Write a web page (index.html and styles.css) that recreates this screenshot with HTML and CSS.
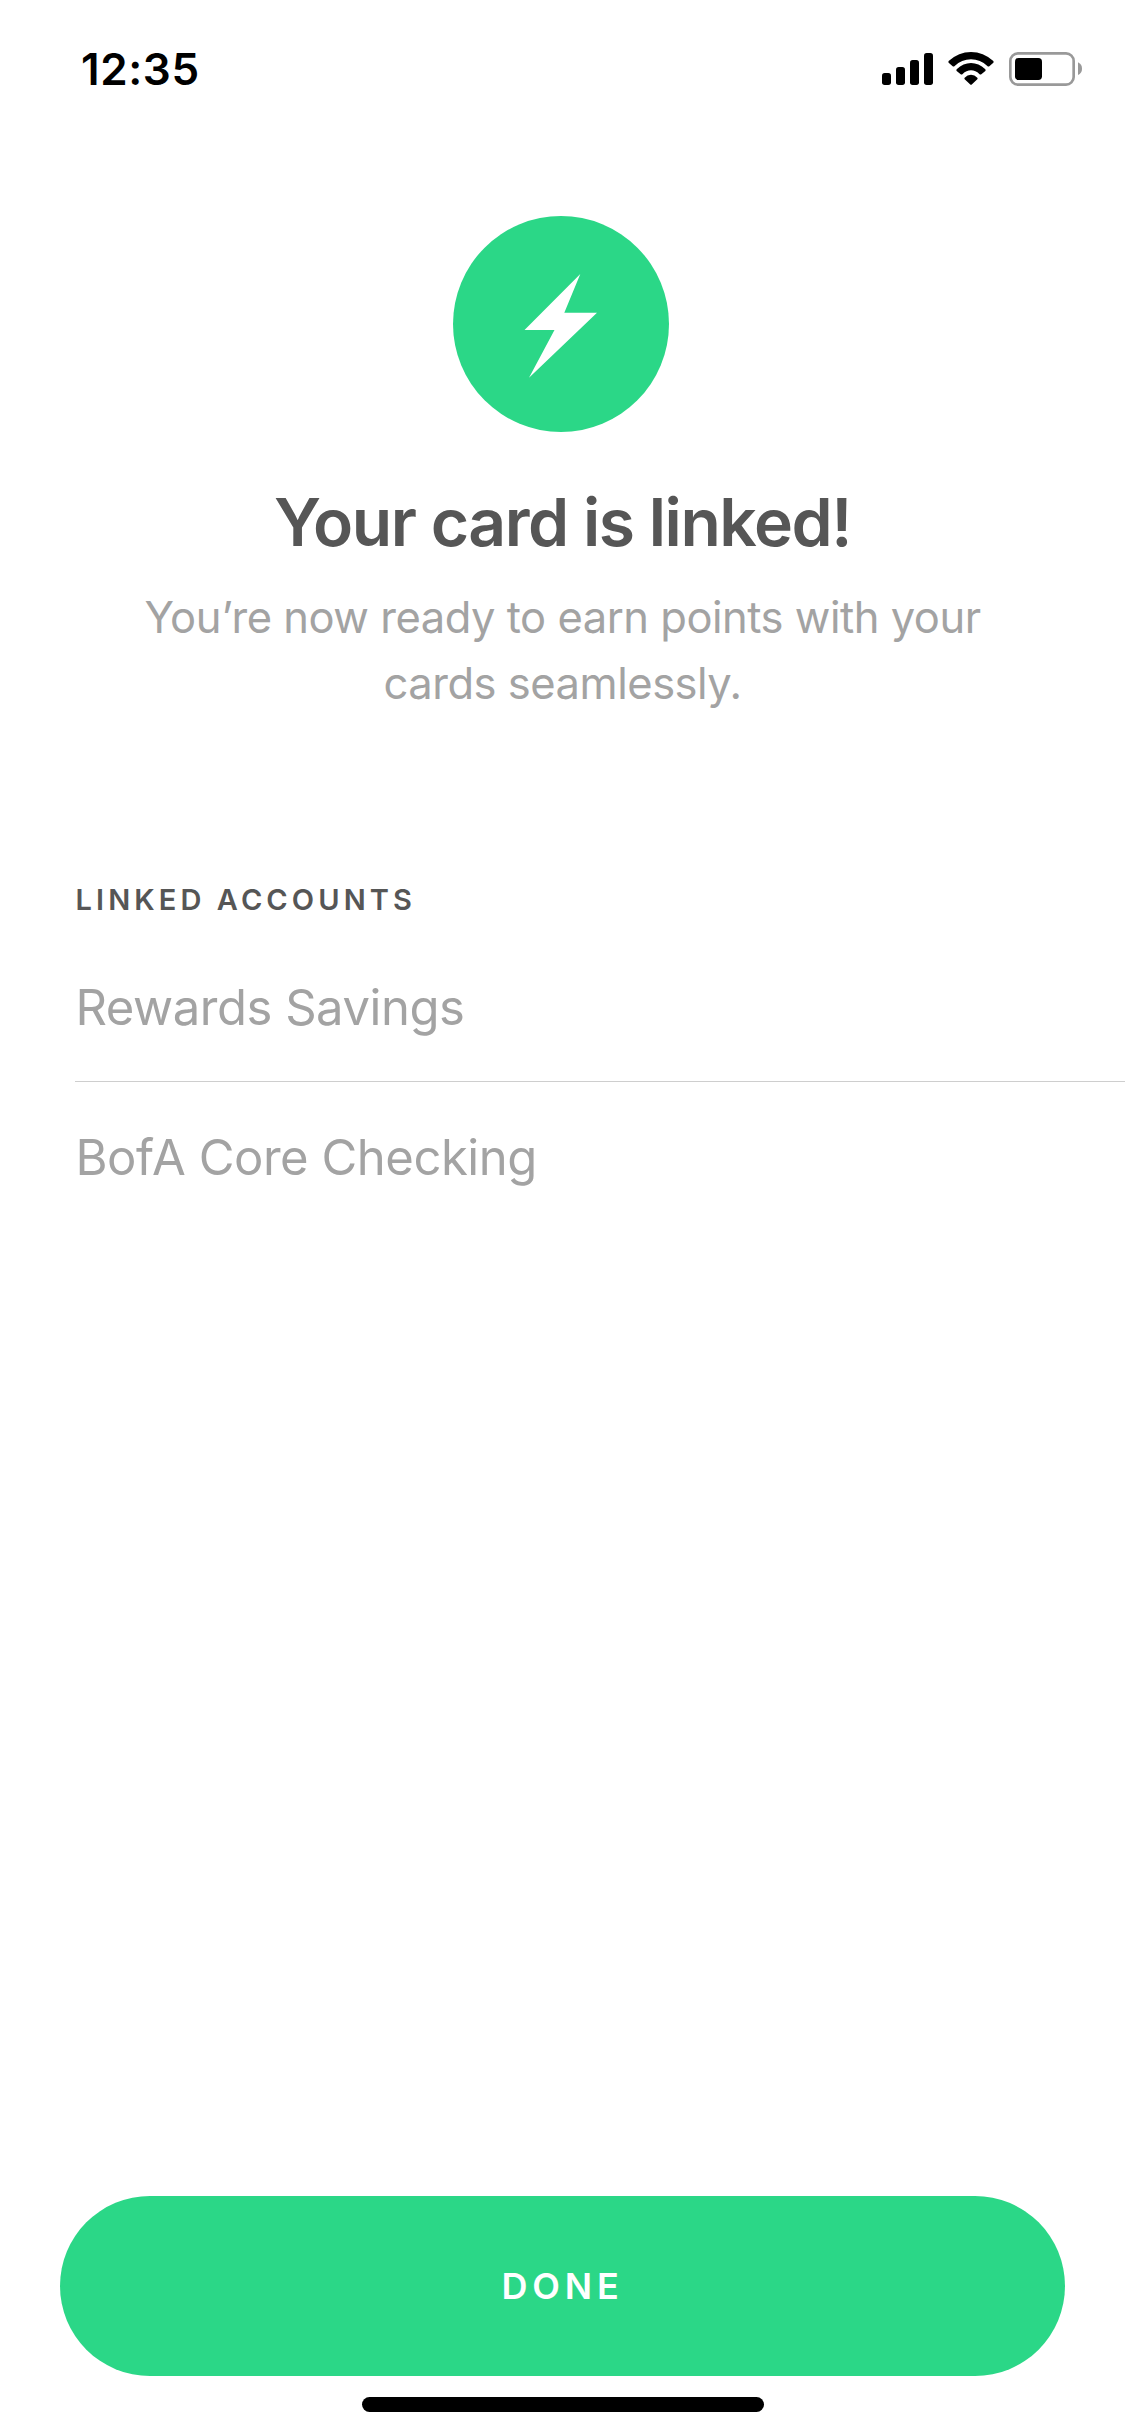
FILE: index.html
```html
<!DOCTYPE html>
<html lang="en">
<head>
<meta charset="utf-8">
<title>Card linked</title>
<link rel="stylesheet" href="styles.css">
</head>
<body>
<div class="screen">
  <header class="status-bar">
    <span class="time">12:35</span>
    <svg class="status-icons" viewBox="0 0 690 240" aria-hidden="true">
      <!-- signal strength -->
      <rect x="36" y="129" width="27" height="36" rx="8"/>
      <rect x="78" y="111" width="27" height="54" rx="8"/>
      <rect x="120" y="90" width="27" height="75" rx="8"/>
      <rect x="162" y="69" width="27" height="96" rx="8"/>
      <!-- wi-fi -->
      <path d="M236 93Q266 66 303 66T370 93Q372 96 370 98L358 109Q355 111 352 108Q331 88 303 88T254 108Q251 111 248 109L236 98Q234 96 236 93Z"/>
      <path d="M260 118Q280 99 303 99T346 118Q348 121 346 123L334 133Q331 135 328 132Q317 121 303 121T278 132Q275 135 272 133L260 123Q258 121 260 118Z"/>
      <path d="M284 143Q292 134 303 134T322 143Q324 145 322 148L306 163Q303 166 300 163L284 148Q282 145 284 143Z"/>
      <!-- battery -->
      <rect class="battery-shell" x="421" y="70" width="190" height="94" rx="23"/>
      <rect x="435" y="84" width="81" height="66" rx="11"/>
      <path class="battery-cap" d="M624 97Q636 103 636 116T624 135Z"/>
    </svg>
  </header>

  <main class="content">
    <section class="hero">
      <svg class="badge" viewBox="0 0 216 216" aria-hidden="true">
        <circle class="badge-disc" cx="108" cy="108" r="108"/>
        <path class="badge-bolt" d="M127.3 58L111.3 96.7H144L76 161.7L101.5 114H71.5Z"/>
      </svg>
      <h1 class="title">Your card is linked!</h1>
      <p class="subtitle">You’re now ready to earn points with your cards seamlessly.</p>
    </section>

    <section class="accounts">
      <h2 class="accounts-heading">LINKED ACCOUNTS</h2>
      <ul class="account-list">
        <li class="account">Rewards Savings</li>
        <li class="account">BofA Core Checking</li>
      </ul>
    </section>
  </main>

  <footer class="footer">
    <button class="done" type="button">DONE</button>
    <div class="home-indicator"></div>
  </footer>
</div>
</body>
</html>
```
FILE: styles.css
```css
* {
  box-sizing: border-box;
  margin: 0;
  padding: 0;
}

body {
  background: #fff;
  font-family: Inter, "Liberation Sans", sans-serif;
}

.screen {
  display: flex;
  flex-direction: column;
  width: 1125px;
  height: 2436px;
}

.status-bar {
  display: flex;
  justify-content: space-between;
  height: 216px;
  padding: 30px 25px 0 81px;
}

.time {
  margin-top: 9px;
  font-size: 44px;
  font-weight: 600;
  line-height: 60px;
  letter-spacing: 0.6px;
  color: #000;
}

.status-icons {
  width: 230px;
  height: 80px;
}

.battery-shell {
  fill: none;
  stroke: #999;
  stroke-width: 8;
}

.battery-cap {
  fill: #999;
}

.content {
  flex: 1;
}

.hero {
  display: flex;
  flex-direction: column;
  align-items: center;
}

.badge {
  width: 216px;
  height: 216px;
  margin-right: 3px;
}

.badge-disc {
  fill: #2bd787;
}

.badge-bolt {
  fill: #fff;
}

.title {
  margin-top: 50px;
  font-size: 66px;
  font-weight: 600;
  line-height: 80px;
  letter-spacing: -1.45px;
  color: #565656;
}

.subtitle {
  width: 900px;
  margin-top: 22px;
  font-size: 43.5px;
  line-height: 66px;
  letter-spacing: -0.48px;
  text-align: center;
  color: #a3a3a3;
}

.accounts {
  margin-top: 164px;
  padding-left: 75px;
}

.accounts-heading {
  padding-left: 0.5px;
  font-size: 29px;
  font-weight: 600;
  line-height: 40px;
  letter-spacing: 4.1px;
  color: #565656;
}

.account-list {
  margin-top: 12px;
  list-style: none;
}

.account {
  height: 150px;
  padding-left: 0.5px;
  font-size: 49px;
  line-height: 151px;
  letter-spacing: -0.47px;
  color: #a3a3a3;
}

.account:not(:last-child) {
  border-bottom: 1px solid #cecece;
}

.footer {
  display: flex;
  flex-direction: column;
  align-items: center;
  gap: 21px;
  padding: 0 60px 24px;
}

.done {
  width: 100%;
  height: 180px;
  border: 0;
  border-radius: 90px;
  background: #2bd787;
  color: #fff;
  font-family: inherit;
  font-size: 36px;
  font-weight: 600;
  letter-spacing: 4.8px;
}

.home-indicator {
  width: 402px;
  height: 15px;
  border-radius: 8px;
  background: #000;
}
```
